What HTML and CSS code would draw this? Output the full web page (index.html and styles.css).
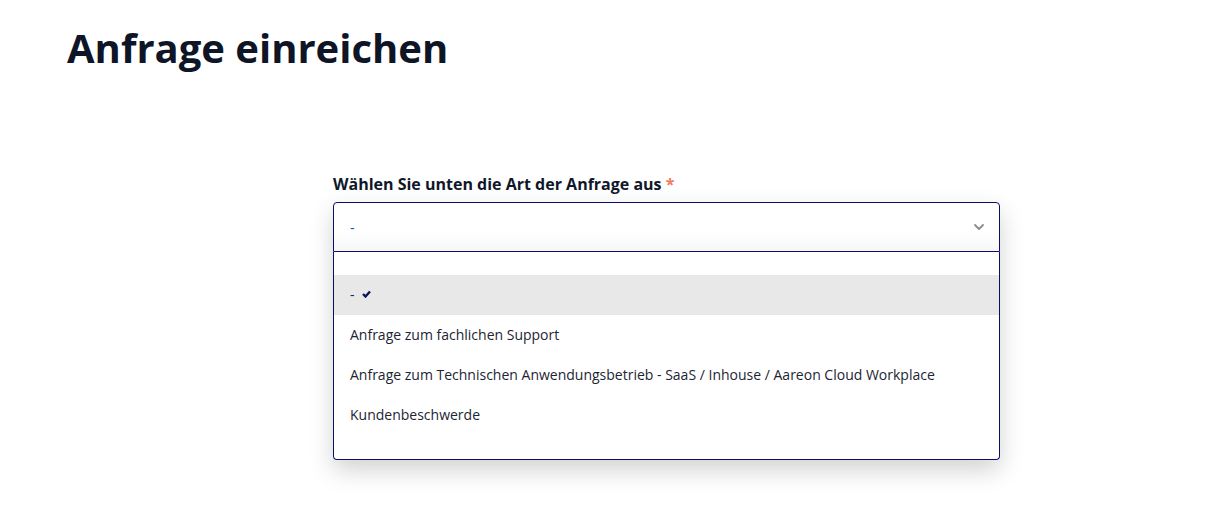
FILE: index.html
```html
<!DOCTYPE html>
<html lang="de">
<head>
    <meta charset="UTF-8">
    <title>Anfrage einreichen</title>
    <link rel="stylesheet" href="styles.css">
</head>
<body>

<div class="page">
    <h1>Anfrage einreichen</h1>

    <div class="form">
        <label class="field-label">Wählen Sie unten die Art der Anfrage aus <span class="required">*</span></label>

        <div class="select">
            <div class="select-control">
                <span class="select-value">-</span>
                <svg class="chevron" width="12" height="8" viewBox="0 0 12 8">
                    <path d="M2 2l4 4 4-4" fill="none" stroke="#8c8c8c" stroke-width="1.8" stroke-linecap="round" stroke-linejoin="round"/>
                </svg>
            </div>
            <ul class="select-menu">
                <li class="option selected">-
                    <svg class="check" width="9" height="8" viewBox="0 0 9 8">
                        <path d="M1 4l2.5 2.5 4.5-5" fill="none" stroke="#0b1560" stroke-width="2.4"/>
                    </svg>
                </li>
                <li class="option">Anfrage zum fachlichen Support</li>
                <li class="option">Anfrage zum Technischen Anwendungsbetrieb - SaaS / Inhouse / Aareon Cloud Workplace</li>
                <li class="option">Kundenbeschwerde</li>
            </ul>
        </div>
    </div>
</div>

</body>
</html>
```

FILE: styles.css
```css
:root {
    --text-color: #0f172a;
    --border-color: #0b0d6b;
    --link-color: #0052cc;
}
body {
    margin: 0;
    min-height: 100vh;
    font-family: "Open Sans", "Liberation Sans", sans-serif;
    color: var(--text-color);
    background: #fff;
}
.page {
    padding: 20px 0 48px 67px;
}
h1 {
    margin: 0;
    font-size: 40px;
    font-weight: 700;
    line-height: 56px;
    color: #0d1526;
}
.form {
    width: 667px;
    margin: 97px 0 0 266px;
}
.field-label {
    display: block;
    font-size: 16px;
    font-weight: 700;
    line-height: 22px;
    margin-bottom: 7px;
}
.required { color: #f07a5a; }

/* dropdown opened below the control */
.select {
    box-shadow: 0 10px 24px rgba(0, 0, 0, 0.18);
    border-radius: 4px;
}
.select-control {
    display: flex;
    align-items: center;
    justify-content: space-between;
    height: 48px;
    padding: 0 14px 0 16px;
    border: 1px solid var(--border-color);
    border-radius: 4px 4px 0 0;
    background: linear-gradient(#fff 60%, #f7f7f7);
}
.select-value {
    color: var(--link-color);
    font-size: 14px;
}
.select-menu {
    list-style: none;
    margin: 0;
    padding: 23px 0 24px;
    border: 1px solid var(--border-color);
    border-top: none;
    border-radius: 0 0 4px 4px;
    background: #fff;
}
.option {
    box-sizing: border-box;
    height: 40px;
    display: flex;
    align-items: center;
    gap: 7px;
    padding: 0 16px 2px;
    font-size: 14px;
    color: #1c2533;
}
.option.selected { background: #e8e8e8; }
```
